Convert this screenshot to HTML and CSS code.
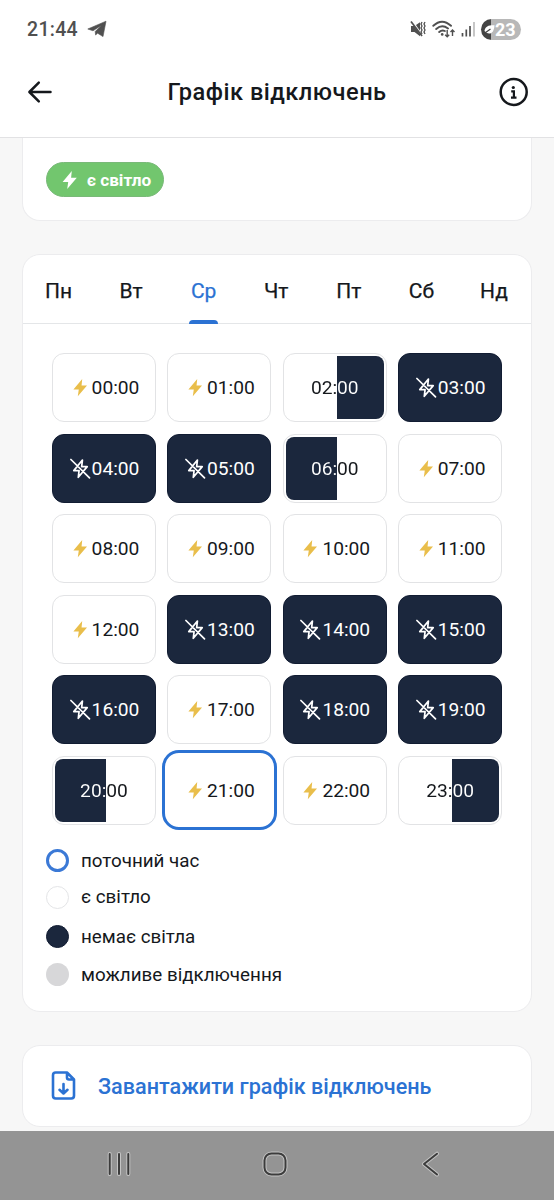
FILE: index.html
```html
<!DOCTYPE html>
<html lang="uk">
<head>
<meta charset="utf-8">
<title>Графік відключень</title>
<link rel="stylesheet" href="styles.css">
</head>
<body>
<svg class="defs" width="0" height="0">
  <symbol id="bolt" viewBox="0 0 24 24"><path d="M13.8 3 4.600 14h5.6L9.200 21 18.800 9.800h-5.700z"/></symbol>
  <symbol id="bolt-off" viewBox="0 0 24 24"><path d="M14 3.200 5 14.200h5.500l-.8 7L19 10H13.200z M2 2.600 21.400 21.800" fill="none" stroke="currentColor" stroke-width="1.800" stroke-linejoin="round" stroke-linecap="round"/></symbol>
</svg>
<div class="screen">
  <div class="status">
    <span class="clock">21:44</span>
    <svg class="plane" width="20" height="18" viewBox="0 0 20 18"><path d="M.8 9 19 1.200 16 16.600 10.600 13.200 8.600 15 8.200 11.600 14.300 5.400 6 10.800Z" fill="#505050" stroke="#505050" stroke-width=".6"/></svg>
    <div class="indicators">
      <svg width="17" height="18" viewBox="0 0 17 18"><path d="M1 6h3.500L10 2.200v14L4.500 12H1z" fill="#505050"/><path d="M1.500 .5 12.500 16" stroke="#fff" stroke-width="2"/><path d="M1 1.500 12 16" stroke="#505050" stroke-width="1.700"/><path d="m12 2-1 2 1 2-1 2 1 2-1 2 1 2M15 2l-1 2 1 2-1 2 1 2-1 2 1 2" fill="none" stroke="#505050" stroke-width="1.300"/></svg>
      <svg width="24" height="18" viewBox="0 0 24 18"><path d="M1.300 5.800Q10-2.500 19 5.800M4.200 9Q10 3.800 16 8.500M7.200 12Q10 9.500 12.800 11" fill="none" stroke="#505050" stroke-width="1.900" stroke-linecap="round"/><circle cx="10.200" cy="14.400" r="1.300" fill="#505050"/><path d="M15.200 10v6.800m-2-2 2 2 2-2M20.500 16v-6m-2 2 2-2 2 2" fill="none" stroke="#505050" stroke-width="1.400"/></svg>
      <svg width="15" height="18" viewBox="0 0 15 18"><path d="M1.500 13v3.500M5.300 9.500v7M9 6v10.500" stroke="#505050" stroke-width="1.700"/><path d="M13 2v14.500" stroke="#bdbdbd" stroke-width="1.700"/></svg>
      <div class="battery"><svg width="13" height="21" viewBox="0 0 13 21"><path d="M2.500 12C3 7 7 6 12.500 6.200 12 13 9 16 4.500 13.800Z" fill="#fff"/><path d="M1.500 15 8.500 10" stroke="#444" stroke-width="1.200"/></svg><span>23</span></div>
    </div>
  </div>
  <header class="header">
    <svg width="30" height="30" viewBox="0 0 30 30"><path d="M25.500 15H4.500M13.800 5.700 4.400 15l9.400 9.300" fill="none" stroke="#15181c" stroke-width="2.500" stroke-linecap="round" stroke-linejoin="round"/></svg>
    <h1 class="title">Графік відключень</h1>
    <svg width="30" height="30" viewBox="0 0 30 30"><circle cx="14.700" cy="15" r="13" fill="none" stroke="#15181c" stroke-width="2.500"/><circle cx="14.300" cy="10.500" r="1.600" fill="#15181c"/><path d="M12.200 14.300h2.700v6M12 20.700h5.500" fill="none" stroke="#15181c" stroke-width="2.200"/></svg>
  </header>
  <main class="content">
    <section class="card now"><div class="pill"><svg width="24" height="24"><use href="#bolt"/></svg><span>є світло</span></div></section>
    <section class="card schedule">
      <nav class="tabs"><a>Пн</a><a>Вт</a><a class="active">Ср</a><a>Чт</a><a>Пт</a><a>Сб</a><a>Нд</a></nav>
      <div class="grid">
        <div class="cell on"><svg><use href="#bolt"/></svg><span>00:00</span></div>
        <div class="cell on"><svg><use href="#bolt"/></svg><span>01:00</span></div>
        <div class="cell half right"><span>02:00</span></div>
        <div class="cell off"><svg><use href="#bolt-off"/></svg><span>03:00</span></div>
        <div class="cell off"><svg><use href="#bolt-off"/></svg><span>04:00</span></div>
        <div class="cell off"><svg><use href="#bolt-off"/></svg><span>05:00</span></div>
        <div class="cell half left"><span>06:00</span></div>
        <div class="cell on"><svg><use href="#bolt"/></svg><span>07:00</span></div>
        <div class="cell on"><svg><use href="#bolt"/></svg><span>08:00</span></div>
        <div class="cell on"><svg><use href="#bolt"/></svg><span>09:00</span></div>
        <div class="cell on"><svg><use href="#bolt"/></svg><span>10:00</span></div>
        <div class="cell on"><svg><use href="#bolt"/></svg><span>11:00</span></div>
        <div class="cell on"><svg><use href="#bolt"/></svg><span>12:00</span></div>
        <div class="cell off"><svg><use href="#bolt-off"/></svg><span>13:00</span></div>
        <div class="cell off"><svg><use href="#bolt-off"/></svg><span>14:00</span></div>
        <div class="cell off"><svg><use href="#bolt-off"/></svg><span>15:00</span></div>
        <div class="cell off"><svg><use href="#bolt-off"/></svg><span>16:00</span></div>
        <div class="cell on"><svg><use href="#bolt"/></svg><span>17:00</span></div>
        <div class="cell off"><svg><use href="#bolt-off"/></svg><span>18:00</span></div>
        <div class="cell off"><svg><use href="#bolt-off"/></svg><span>19:00</span></div>
        <div class="cell half left"><span>20:00</span></div>
        <div class="cell on current"><svg><use href="#bolt"/></svg><span>21:00</span></div>
        <div class="cell on"><svg><use href="#bolt"/></svg><span>22:00</span></div>
        <div class="cell half right"><span>23:00</span></div>
      </div>
      <ul class="legend">
        <li><i class="dot dot-now"></i>поточний час</li>
        <li><i class="dot dot-on"></i>є світло</li>
        <li><i class="dot dot-off"></i>немає світла</li>
        <li><i class="dot dot-maybe"></i>можливе відключення</li>
      </ul>
    </section>
    <section class="card download">
      <svg width="26" height="30" viewBox="0 0 26 30"><path d="M17 1.500H5.700A2.700 2.700 0 0 0 3 4.200v20.600a2.700 2.700 0 0 0 2.700 2.700h15.600a2.700 2.700 0 0 0 2.700-2.700V8.500zV6.500a2 2 0 0 0 2 2h5M13.500 13v9M9.500 18.800l4 3.700 4-3.700" fill="none" stroke="#2b72d3" stroke-width="2.600" stroke-linejoin="round" stroke-linecap="round"/></svg>
      <span>Завантажити графік відключень</span>
    </section>
  </main>
  <footer class="navbar">
    <svg width="26" height="28" viewBox="0 0 26 28"><g fill="none" stroke-linecap="round"><path d="M3.700 4v20M13 4v20M22.300 4v20" stroke="#c4c4c4" stroke-width="4"/><path d="M3.700 4v20M13 4v20M22.300 4v20" stroke="#3c3c3c" stroke-width="2"/></g></svg>
    <svg width="26" height="28" viewBox="0 0 26 28"><g fill="none"><rect x="2.500" y="3.500" width="21" height="21" rx="7" stroke="#c4c4c4" stroke-width="4"/><rect x="2.500" y="3.500" width="21" height="21" rx="7" stroke="#3c3c3c" stroke-width="2"/></g></svg>
    <svg width="26" height="28" viewBox="0 0 26 28"><g fill="none" stroke-linecap="round" stroke-linejoin="round"><path d="M20 3.700 7 14l13 10.500" stroke="#c4c4c4" stroke-width="4"/><path d="M20 3.700 7 14l13 10.500" stroke="#3c3c3c" stroke-width="2"/></g></svg>
  </footer>
</div>
</body>
</html>
```
FILE: styles.css
```css
* { box-sizing: border-box; }
body { margin: 0; font-family: Roboto, "Liberation Sans", sans-serif; color: #15181c; background: #f7f7f7; }
.defs { position: absolute; }
svg { display: block; flex: none; }
.screen { width: 554px; height: 1200px; display: flex; flex-direction: column; overflow: hidden; }
.status { height: 58px; flex: none; background: #fff; display: flex; align-items: center; padding: 0 33px 0 27px; }
.clock { font-size: 19.500px; font-weight: 500; color: #505050; letter-spacing: .3px; }
.plane { margin-left: 9px; }
.indicators { margin-left: auto; display: flex; align-items: center; gap: 5px; }
.battery { width: 40px; height: 21px; border-radius: 11px; background: linear-gradient(90deg, #444 9.500px, #b8b8b8 9.500px); display: flex; align-items: center; padding-left: 1px; color: #fff; font-size: 18px; font-weight: 700; line-height: 21px; }
.header { height: 80px; flex: none; background: #fff; border-bottom: 1px solid #e2e2e4; padding: 0 25px 11px; display: flex; align-items: center; justify-content: space-between; }
.title { margin: 0; font-size: 23.600px; font-weight: 500; letter-spacing: .5px; }
.content { flex: 1; min-height: 0; padding: 0 22px; display: flex; flex-direction: column; }
.card { background: #fff; border: 1px solid #ececee; border-radius: 18px; flex: none; }
.now { height: 83px; border-top: 0; border-radius: 0 0 18px 18px; padding: 24px 23px 0; margin-bottom: 33px; }
.pill { width: 118px; height: 35px; border-radius: 18px; background: #72c66e; border: 1px solid #79b978; display: flex; align-items: center; gap: 5px; padding-left: 11px; color: #fff; font-size: 17.200px; font-weight: 700; }
.pill svg { fill: #fff; }
.schedule { height: 758px; margin-bottom: 33px; }
.tabs { height: 69px; border-bottom: 1px solid #e4e6e8; display: flex; justify-content: space-between; padding: 0 22.500px 0 21px; }
.tabs a { position: relative; width: 29px; display: flex; justify-content: center; padding-top: 23.600px; font-size: 21px; line-height: 25px; -webkit-text-stroke: .25px; }
.tabs .active { color: #2b72d3; }
.tabs .active::after { content: ""; position: absolute; left: 0; bottom: -1px; width: 29px; height: 4px; border-radius: 4px 4px 0 0; background: #2b72d3; }
.grid { display: grid; grid-template-columns: repeat(4, 104px); grid-auto-rows: 69px; gap: 11.500px 11.400px; padding: 29px 29px 0; }
.cell { position: relative; border: 1.500px solid #e2e3e5; border-radius: 12px; display: flex; align-items: center; justify-content: center; font-size: 19.200px; color: #15181c; }
.cell svg { width: 23px; height: 23px; }
.cell.on svg { fill: #e9be4b; }
.cell.off { background: #1b273d; border-color: #111c32; color: #fff; }
.cell.half { padding: 2px; border-width: 1px; }
.cell.half span { width: 98px; height: 63px; line-height: 63px; text-align: center; border-radius: 8px; }
.half.left span { background: linear-gradient(90deg, #fff 51px, #15181c 51px) text, linear-gradient(90deg, #1b273d 51px, transparent 51px) border-box; color: transparent; }
.half.right span { background: linear-gradient(90deg, #15181c 51px, #fff 51px) text, linear-gradient(90deg, transparent 51px, #1b273d 51px) border-box; color: transparent; }
.cell.current { border-color: transparent; }
.cell.current::before { content: ""; position: absolute; inset: -6.500px; border: 3px solid #2b72d3; border-radius: 17px; }
.legend { list-style: none; margin: 0; padding: 24.500px 23px 0; font-size: 18.800px; }
.legend li { display: flex; align-items: center; gap: 12px; height: 23px; margin-bottom: 13.500px; }
.legend li:nth-child(2) { margin-bottom: 16.500px; }
.legend li:nth-child(3) { margin-bottom: 15px; }
.dot { width: 23px; height: 23px; border-radius: 50%; }
.dot-now { border: 3px solid #3b79d6; }
.dot-on { border: 1.500px solid #e4e5e7; }
.dot-off { background: #1b273d; border: 1px solid #111c32; }
.dot-maybe { background: #d7d7d9; }
.download { height: 82px; display: flex; align-items: center; gap: 22px; padding: 0 27px; color: #2b72d3; font-size: 21.600px; font-weight: 500; }
.navbar { height: 69px; flex: none; background: #949494; display: flex; justify-content: space-between; align-items: center; padding: 0 111px 4px 106px; }
```
